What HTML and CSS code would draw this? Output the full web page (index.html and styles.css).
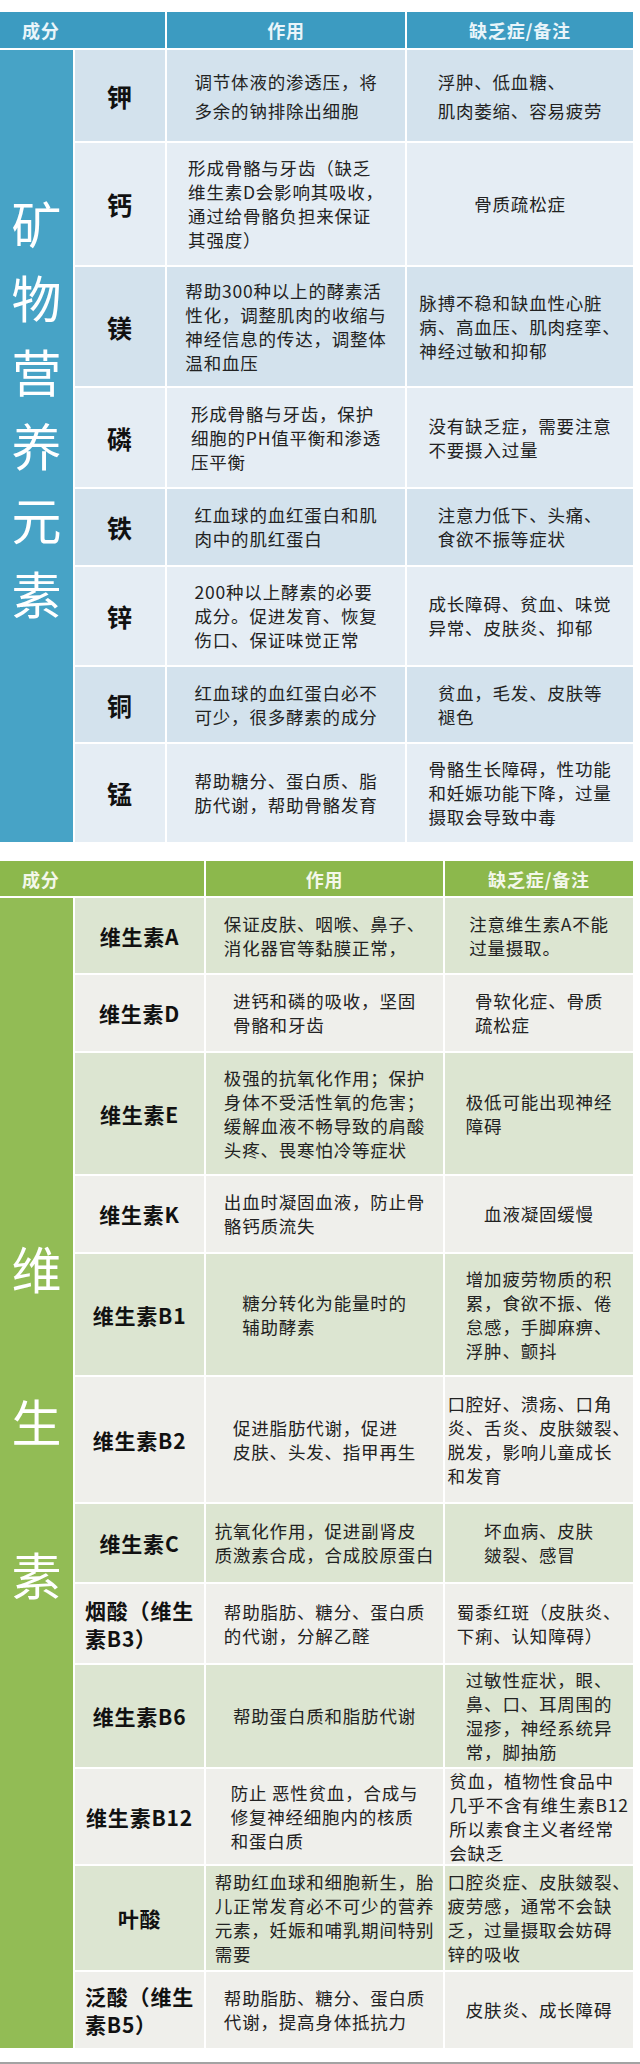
FILE: index.html
```html
<!DOCTYPE html>
<html lang="zh-CN">
<head>
<meta charset="utf-8">
<title>矿物营养元素与维生素</title>
<link rel="stylesheet" href="styles.css">
</head>
<body>
<div class="page">
  <div class="tbl b tbl-min">
    <div class="cat cat-min">矿<br>物<br>营<br>养<br>元<br>素</div>
    <div class="hd hd-first">成分</div>
    <div class="hd hd-c">作用</div>
    <div class="hd hd-c">缺乏症/备注</div>

    <div class="c nm dk"><span>钾</span></div>
    <div class="c dk loose"><span>调节体液的渗透压，将<br>多余的钠排除出细胞</span></div>
    <div class="c dk loose"><span>浮肿、低血糖、<br>肌肉萎缩、容易疲劳</span></div>

    <div class="c nm lt"><span>钙</span></div>
    <div class="c lt"><span>形成骨骼与牙齿（缺乏<br>维生素D会影响其吸收，<br>通过给骨骼负担来保证<br>其强度）</span></div>
    <div class="c lt"><span>骨质疏松症</span></div>

    <div class="c nm dk"><span>镁</span></div>
    <div class="c dk"><span>帮助300种以上的酵素活<br>性化，调整肌肉的收缩与<br>神经信息的传达，调整体<br>温和血压</span></div>
    <div class="c dk"><span>脉搏不稳和缺血性心脏<br>病、高血压、肌肉痉挛、<br>神经过敏和抑郁</span></div>

    <div class="c nm lt"><span>磷</span></div>
    <div class="c lt"><span>形成骨骼与牙齿，保护<br>细胞的PH值平衡和渗透<br>压平衡</span></div>
    <div class="c lt"><span>没有缺乏症，需要注意<br>不要摄入过量</span></div>

    <div class="c nm dk"><span>铁</span></div>
    <div class="c dk"><span>红血球的血红蛋白和肌<br>肉中的肌红蛋白</span></div>
    <div class="c dk"><span>注意力低下、头痛、<br>食欲不振等症状</span></div>

    <div class="c nm lt"><span>锌</span></div>
    <div class="c lt"><span>200种以上酵素的必要<br>成分。促进发育、恢复<br>伤口、保证味觉正常</span></div>
    <div class="c lt"><span>成长障碍、贫血、味觉<br>异常、皮肤炎、抑郁</span></div>

    <div class="c nm dk"><span>铜</span></div>
    <div class="c dk"><span>红血球的血红蛋白必不<br>可少，很多酵素的成分</span></div>
    <div class="c dk"><span>贫血，毛发、皮肤等<br>褪色</span></div>

    <div class="c nm lt"><span>锰</span></div>
    <div class="c lt"><span>帮助糖分、蛋白质、脂<br>肪代谢，帮助骨骼发育</span></div>
    <div class="c lt"><span>骨骼生长障碍，性功能<br>和妊娠功能下降，过量<br>摄取会导致中毒</span></div>
  </div>

  <div class="tbl g tbl-vit">
    <div class="cat cat-vit">维<br>生<br>素</div>
    <div class="hd hd-first">成分</div>
    <div class="hd hd-c">作用</div>
    <div class="hd hd-c">缺乏症/备注</div>

    <div class="c nm dk"><span>维生素A</span></div>
    <div class="c dk"><span>保证皮肤、咽喉、鼻子、<br>消化器官等黏膜正常，</span></div>
    <div class="c dk"><span>注意维生素A不能<br>过量摄取。</span></div>

    <div class="c nm lt"><span>维生素D</span></div>
    <div class="c lt"><span>进钙和磷的吸收，坚固<br>骨骼和牙齿</span></div>
    <div class="c lt"><span>骨软化症、骨质<br>疏松症</span></div>

    <div class="c nm dk"><span>维生素E</span></div>
    <div class="c dk"><span>极强的抗氧化作用；保护<br>身体不受活性氧的危害；<br>缓解血液不畅导致的肩酸<br>头疼、畏寒怕冷等症状</span></div>
    <div class="c dk"><span>极低可能出现神经<br>障碍</span></div>

    <div class="c nm lt"><span>维生素K</span></div>
    <div class="c lt"><span>出血时凝固血液，防止骨<br>骼钙质流失</span></div>
    <div class="c lt"><span>血液凝固缓慢</span></div>

    <div class="c nm dk"><span>维生素B1</span></div>
    <div class="c dk"><span>糖分转化为能量时的<br>辅助酵素</span></div>
    <div class="c dk"><span>增加疲劳物质的积<br>累，食欲不振、倦<br>怠感，手脚麻痹、<br>浮肿、颤抖</span></div>

    <div class="c nm lt"><span>维生素B2</span></div>
    <div class="c lt"><span>促进脂肪代谢，促进<br>皮肤、头发、指甲再生</span></div>
    <div class="c lt"><span>口腔好、溃疡、口角<br>炎、舌炎、皮肤皴裂、<br>脱发，影响儿童成长<br>和发育</span></div>

    <div class="c nm dk"><span>维生素C</span></div>
    <div class="c dk"><span>抗氧化作用，促进副肾皮<br>质激素合成，合成胶原蛋白</span></div>
    <div class="c dk"><span>坏血病、皮肤<br>皴裂、感冒</span></div>

    <div class="c nm lt"><span>烟酸（维生<br>素B3）</span></div>
    <div class="c lt"><span>帮助脂肪、糖分、蛋白质<br>的代谢，分解乙醛</span></div>
    <div class="c lt"><span>蜀黍红斑（皮肤炎、<br>下痢、认知障碍）</span></div>

    <div class="c nm dk"><span>维生素B6</span></div>
    <div class="c dk"><span>帮助蛋白质和脂肪代谢</span></div>
    <div class="c dk"><span>过敏性症状，眼、<br>鼻、口、耳周围的<br>湿疹，神经系统异<br>常，脚抽筋</span></div>

    <div class="c nm lt"><span>维生素B12</span></div>
    <div class="c lt"><span>防止 恶性贫血，合成与<br>修复神经细胞内的核质<br>和蛋白质</span></div>
    <div class="c lt"><span>贫血，植物性食品中<br>几乎不含有维生素B12<br>所以素食主义者经常<br>会缺乏</span></div>

    <div class="c nm dk"><span>叶酸</span></div>
    <div class="c dk"><span>帮助红血球和细胞新生，胎<br>儿正常发育必不可少的营养<br>元素，妊娠和哺乳期间特别<br>需要</span></div>
    <div class="c dk"><span>口腔炎症、皮肤皴裂、<br>疲劳感，通常不会缺<br>乏，过量摄取会妨碍<br>锌的吸收</span></div>

    <div class="c nm lt"><span>泛酸（维生<br>素B5）</span></div>
    <div class="c lt"><span>帮助脂肪、糖分、蛋白质<br>代谢，提高身体抵抗力</span></div>
    <div class="c lt"><span>皮肤炎、成长障碍</span></div>
  </div>
  <div class="foot"></div>
</div>
</body>
</html>
```

FILE: styles.css
```css
* {
  box-sizing: border-box;
}

html, body {
  margin: 0;
  padding: 0;
  background: #ffffff;
}

body {
  font-family: "Noto Sans CJK SC", "Noto Sans", "Liberation Sans", sans-serif;
}

.page {
  width: 640px;
  padding-top: 12px;
}

.tbl {
  display: grid;
  width: 633px;
  gap: 2px;
  background: #ffffff;
}

.tbl-min {
  grid-template-columns: 73px 90px 238px 226px;
  grid-template-rows: 36px 91px 122px 119px 99px 76px 98px 75px 98px;
}

.tbl-vit {
  margin-top: 19px;
  grid-template-columns: 73px 129px 237px 188px;
  grid-template-rows: 35px 75px 76px 121px 76px 121px 125px 78px 79px 102px 95px 104px 76px;
}

.hd {
  display: flex;
  align-items: center;
  font-size: 18px;
  font-weight: bold;
  letter-spacing: 0.8px;
}

.b .hd {
  background: #3c9bc1;
  color: #e9f5fa;
}

.g .hd {
  background: #8cb84c;
  color: #f3f7ea;
}

.hd-first {
  grid-column: 1 / 3;
  padding-left: 22px;
}

.hd-c {
  justify-content: center;
}

.cat {
  grid-column: 1;
  grid-row: 2 / -1;
  color: #ffffff;
  font-size: 50px;
  text-align: center;
}

.cat-min {
  background: #47a3c6;
  padding-top: 135px;
  line-height: 74px;
}

.cat-vit {
  background: #92bc55;
  padding-top: 293px;
  line-height: 153px;
}

.c {
  display: flex;
  align-items: center;
  justify-content: center;
  font-size: 17.5px;
  line-height: 24px;
  letter-spacing: 0.8px;
  color: #222222;
  white-space: nowrap;
}

.c > span {
  display: block;
  text-align: left;
}

.loose {
  line-height: 29px;
}

.nm {
  font-weight: bold;
  color: #111111;
}

.b .nm {
  font-size: 25px;
}

.g .nm {
  font-size: 21px;
  line-height: 28px;
}

.b .dk {
  background: #d3e2ed;
}

.b .lt {
  background: #e5edf4;
}

.g .dk {
  background: #dce5d1;
}

.g .lt {
  background: #efefeb;
}

.foot {
  height: 16px;
  border-bottom: 2px solid #a3a3a3;
}
```
